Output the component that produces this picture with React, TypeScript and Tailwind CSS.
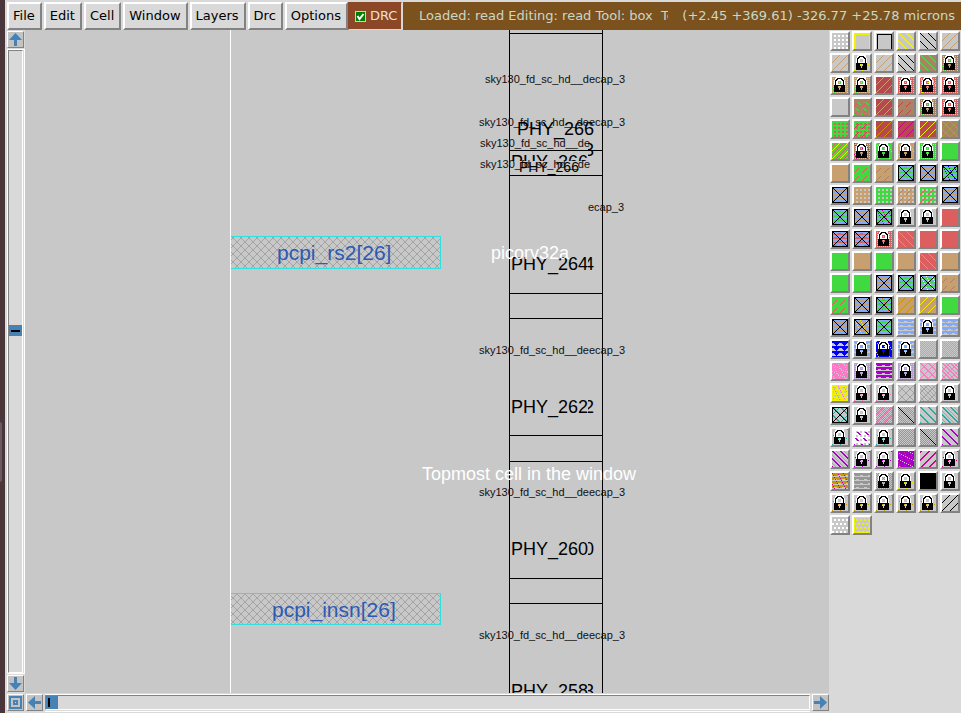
import React from "react";

type Mark = (x: number, y: number) => boolean;
type Layer = [Mark, string];
type Tile = { name: string; bg: string; layers: Layer[] };

const SIZE = 16;

const GRAY = "#c8c8c8";
const GREEN = "#40d940";
const RED = "#db5f5f";
const BRICK = "#b84750";
const TAN = "#c8a070";
const BROWN = "#ac8264";
const SKY = "#82a8f8";
const BLUE = "#0000ff";
const YELLOW = "#f0f000";
const GOLD = "#c89600";
const MAGENTA = "#c8008c";
const PURPLE = "#a800c8";
const LILAC = "#b8a0d0";
const PINK = "#ff78c8";
const TEAL = "#28a8a0";
const DIM = "#969696";
const WHITE = "#ffffff";
const BLACK = "#000000";

/* Stipple rules, evaluated once for each pixel of a layer swatch. */
const all: Mark = () => true;
const rise: Mark = (x, y) => (x + y) % 8 === 7;
const riseB: Mark = (x, y) => (x + y) % 8 === 3;
const fall: Mark = (x, y) => (x - y + 32) % 8 === 0;
const fallB: Mark = (x, y) => (x - y + 32) % 8 === 4;
const fallWide: Mark = (x, y) => (x - y + 32) % 8 < 2;
const riseWide: Mark = (x, y) => (x + y) % 8 < 2;
const riseDash: Mark = (x, y) => (x + y) % 8 === 7 && y % 8 > 2;
const fallDash: Mark = (x, y) => (x - y + 32) % 8 < 2 && y % 6 > 2;
const cross: Mark = (x, y) => fall(x, y) || rise(x, y);
const crossWide: Mark = (x, y) => fallWide(x, y) || rise(x, y);
const dots: Mark = (x, y) => x % 4 > 1 && y % 4 > 1;
const brickDots: Mark = (x, y) => y % 4 > 1 && (x + (y % 8 > 3 ? 2 : 0)) % 4 > 1;
const checker: Mark = (x, y) => (x + y) % 2 === 0;
const mesh: Mark = (x, y) => x % 2 === 0 || y % 2 === 0;
const specks: Mark = (x, y) => (x * 5 + y * 3) % 11 === 0;
const specksB: Mark = (x, y) => (x * 3 + y * 7) % 13 === 4;
const sparse: Mark = (x, y) => (x + y) % 8 === 7 && y % 3 === 0;
const waves: Mark = (x, y) => y % 4 === 3 || (y % 4 === 2 && (x + y) % 8 < 3);
const frame: Mark = (x, y) => x === 0 || x === 15 || y === 0 || y === 15;
const cap: Mark = (x, y) => y > 0 && (x === 1 || x === 15 || (y === 1 && x > 0));
const capWide: Mark = (x, y) => x < 2 || x > 14 || y < 2;
const contact: Mark = (x, y) => frame(x, y) || x === y || x + y === 15;
const slash: Mark = (x, y) => x === y;
const triangles: Mark = (x, y) => y % 5 === 1 || Math.abs((x % 8) - 4) < 5 - (y % 5);

const LOCK = [
  "....WWWWWWWW....",
  "...WWBBBBBWW....",
  "...WBBWWWBBW....",
  "..WBBWWWWWBBW...",
  "..WBWW...WWBW...",
  "..WBWW...WWBW...",
  "..WBWW...WWBW...",
  "..WBWWWWWWWBW...",
  "..BBBBBBBBBBB...",
  "..BBBB...BBBB...",
  "..BBBB...BBBB...",
  "..BBBBB.BBBBB...",
  "..BBBBB.BBBBB...",
  "..BBBBBBBBBBB...",
  "..BBBBBBBBBBB...",
  "................",
];
const lockWhite: Mark = (x, y) => LOCK[y][x] === "W";
const lockBlack: Mark = (x, y) => LOCK[y][x] === "B";

const t = (name: string, bg: string, ...layers: Layer[]): Tile => ({ name, bg, layers });
const lock = (name: string, ...layers: Layer[]): Tile =>
  t(name + " locked", GRAY, ...layers, [lockWhite, WHITE], [lockBlack, BLACK]);
const via = (name: string, tint: string, ...layers: Layer[]): Tile =>
  t(name, SKY, [waves, tint], ...layers, [contact, BLACK]);

const TILES: Tile[] = [
  t("grid", GRAY, [dots, WHITE]), t("edit box", GRAY, [capWide, YELLOW]), t("box", GRAY, [cap, BLACK]),
  t("highlight", GRAY, [fallWide, YELLOW]), t("cell", GRAY, [fall, BLACK]), t("nwell", GRAY, [rise, TAN]),

  t("pwell", GRAY, [rise, TAN]), lock("rpwell", [sparse, YELLOW]), t("isosub", GRAY, [rise, TAN]),
  t("obswell", GRAY, [fall, BLACK]), t("ndiff", BROWN, [fallWide, GREEN]), lock("pdiff", [mesh, BROWN], [specks, GREEN]),

  lock("nmos", [mesh, TAN], [specks, GREEN]), lock("pmos", [mesh, TAN], [specks, GREEN]), t("npoly", BRICK, [rise, TAN]),
  lock("ppoly", [mesh, RED]), lock("scpmos", [mesh, RED], [specks, YELLOW]), lock("scnmos", [mesh, RED]),

  t("blank", GRAY), t("varactor", BROWN, [riseDash, RED], [fallDash, GREEN]), t("poly", BRICK, [rise, TAN]),
  t("npres", BROWN, [riseDash, BRICK]), lock("mvnmos", [mesh, BROWN], [specks, GREEN]), lock("mvpmos", [mesh, RED]),

  t("ntap", GREEN, [dots, RED]), t("ptap", GREEN, [dots, RED], [riseDash, BRICK]), t("rpoly", BRICK, [rise, GOLD]),
  t("xpoly", BRICK, [rise, MAGENTA]), t("upoly", BRICK, [rise, YELLOW]), t("photo", BROWN, [fall, GREEN], [rise, "#98a040"]),

  t("nvaractor", GREEN, [rise, YELLOW], [riseB, RED]), lock("corenvar", [mesh, BROWN], [specks, MAGENTA]),
  lock("corepvar", [all, GREEN], [specks, GRAY]), lock("mvvar", [all, TAN], [specks, GRAY]), lock("pvar", [mesh, GREEN]), t("ndiffusion", GREEN),

  t("pdiffusion", TAN), t("nres", GREEN, [riseDash, RED]), t("pres", TAN, [riseDash, BROWN]),
  via("ndc", GREEN), via("pdc", TAN), via("nsc", GREEN, [specks, BLUE]),

  via("psc", TAN), t("psd", TAN, [dots, GRAY]), t("nsd", GREEN, [dots, GRAY]),
  t("mvpsd", TAN, [dots, GRAY], [riseDash, BROWN]), t("mvnsd", GREEN, [dots, GRAY], [riseDash, RED]), via("mvpsc", TAN),

  via("mvndc", GREEN), via("mvpdc", TAN), via("mvnsc", GREEN, [specks, MAGENTA]),
  lock("space"), lock("fill"), t("polysilicon", RED),

  via("pc", RED), via("xpc", RED), lock("polyfill", [mesh, RED]),
  t("polyres", RED, [fall, TAN]), t("mrp", RED), t("xhr", RED),

  t("nnd", GREEN), t("pnd", TAN), t("mvndiff", GREEN), t("mvpdiff", TAN), t("mvpoly", RED, [fall, TAN]), t("mvptap", TAN),

  t("mvntap", GREEN), t("nfd", GREEN), via("pfc", TAN), via("nfc", GREEN), via("nfs", GREEN, [specks, WHITE]), t("pfr", TAN, [riseDash, BROWN]),

  t("diode", GREEN, [riseDash, RED]), via("dc", TAN), via("dcn", GREEN, [specks, RED]),
  t("pdiode", TAN, [rise, GOLD]), t("hvdiode", TAN, [rise, YELLOW]), t("lvdiode", GREEN),

  via("pdic", TAN), via("mvpdic", TAN, [specks, YELLOW]), via("ndic", GREEN),
  t("locali", SKY, [waves, GRAY]), lock("obsli", [all, SKY], [waves, GRAY]), t("rli", SKY, [waves, GRAY], [fall, TAN]),

  t("coreli", GRAY, [triangles, BLUE]), lock("lifill", [all, SKY], [waves, GRAY]), lock("corelifill", [all, BLUE], [specks, GRAY]),
  lock("lires", [all, SKY], [waves, GRAY]), t("metal1", GRAY, [checker, LILAC]), t("rm1", GRAY, [checker, LILAC], [fall, TAN]),

  t("via1", PINK, [specks, GRAY], [specksB, GRAY]), lock("obsm1", [mesh, LILAC]), t("m1fill", PURPLE, [waves, GRAY]),
  lock("m1block", [mesh, LILAC]), t("metal2", GRAY, [crossWide, PINK]), t("rm2", GRAY, [crossWide, PINK], [fallB, TAN]),

  t("via2", YELLOW, [brickDots, GRAY], [specks, PINK], [frame, YELLOW]), lock("obsm2", [sparse, PINK]), lock("m2fill", [sparse, PINK]),
  t("metal3", GRAY, [cross, "#a0a0a0"]), t("rm3", GRAY, [cross, "#a0a0a0"], [fallB, TAN]), lock("obsm3"),

  t("via3", GRAY, [crossWide, TEAL], [contact, BLACK]), lock("m3fill"), t("mimcap", GRAY, [checker, DIM], [cross, PINK]),
  t("mimcc", GRAY, [checker, DIM], [fallB, PINK], [slash, BLACK]), t("metal4", GRAY, [fallWide, TEAL]), t("rm4", GRAY, [fallWide, TEAL], [fallB, TAN]),

  lock("obsm4", [sparse, TEAL]), t("via4", WHITE, [dots, GRAY], [fallDash, PURPLE]), lock("m4fill", [sparse, TEAL]),
  t("mimcap2", GRAY, [checker, DIM]), t("mim2cc", GRAY, [checker, DIM], [slash, BLACK]), t("metal5", GRAY, [fallWide, PURPLE]),

  t("rm5", GRAY, [fallWide, PURPLE], [fallB, TAN]), lock("obsm5", [sparse, PURPLE]), lock("m5fill", [sparse, PURPLE]),
  t("glass", PURPLE, [specks, "#c828a0"], [specksB, GRAY]), t("rdl", GRAY, [riseWide, MAGENTA]), lock("obsrdl", [sparse, MAGENTA]),

  t("rdlc", GOLD, [waves, GRAY], [specks, MAGENTA]), t("comment", DIM, [waves, GRAY]), lock("bb", [checker, DIM]),
  lock("boundary", [sparse, YELLOW]), t("error", BLACK), lock("res"),

  lock("pad", [sparse, GOLD]), lock("padl", [sparse, GOLD]), lock("res0p35", [sparse, GOLD]), lock("res0p69", [sparse, GOLD]),
  lock("res1p41", [sparse, GOLD]), t("magnet", GRAY, [rise, BLACK]),

  t("fence", GRAY, [brickDots, WHITE]), t("rotate", GRAY, [brickDots, YELLOW], [frame, YELLOW]),
];

/* Turns a stipple rule into one path made of horizontal runs. */
function runs(mark: Mark): string {
  let d = "";
  for (let y = 0; y < SIZE; y++) {
    let start = -1;
    for (let x = 0; x <= SIZE; x++) {
      const on = x < SIZE && mark(x, y);
      if (on && start < 0) start = x;
      if (!on && start >= 0) {
        d += `M${start} ${y}h${x - start}v1h${start - x}z`;
        start = -1;
      }
    }
  }
  return d;
}

function Swatch({ tile }: { tile: Tile }) {
  return (
    <button
      type="button"
      aria-label={tile.name}
      className="size-5 border-2 border-t-white border-l-white border-r-[#828282] border-b-[#828282]"
    >
      <svg viewBox="0 0 16 16" className="block size-4" shapeRendering="crispEdges" aria-hidden="true">
        <rect width="16" height="16" fill={tile.bg} />
        {tile.layers.map(([mark, color], i) => (
          <path key={i} d={runs(mark)} fill={color} />
        ))}
      </svg>
    </button>
  );
}

function ArrowButton({ label, turn }: { label: string; turn: string }) {
  return (
    <button
      type="button"
      aria-label={label}
      className="size-[17px] shrink-0 border border-t-white border-l-white border-r-[#828282] border-b-[#828282] bg-[#c3c3c3]"
    >
      <svg viewBox="0 0 15 15" className={"block size-[15px] " + turn} aria-hidden="true">
        <path d="M7.5 1L14 8H9v6H6V8H1z" fill="#4682b4" />
      </svg>
    </button>
  );
}

const MENUS = ["File", "Edit", "Cell", "Window", "Layers", "Drc", "Options"];

function MenuBar() {
  return (
    <header className="flex h-[30px] shrink-0 items-stretch bg-[#d9d9d9] pt-0.5 pl-0.5">
      <nav className="flex gap-0.5">
        {MENUS.map((m) => (
          <button
            key={m}
            type="button"
            className="border-2 border-t-white border-l-white border-r-[#828282] border-b-[#828282] bg-[#d9d9d9] pr-[5px] pl-1 text-black"
          >
            {m}
          </button>
        ))}
      </nav>
      <label className="mr-px flex w-[54px] items-center gap-1 border border-[#e8d0c8] border-t-[#8b4726] border-l-[#8b4726] bg-[#8b4726] pl-1.5 text-[#f0e0d8]">
        <span className="relative flex">
          <input type="checkbox" defaultChecked className="size-[11px] appearance-none border border-[#d0d0c0] bg-[#008000]" />
          <svg viewBox="0 0 11 11" className="pointer-events-none absolute inset-0 size-[11px]" aria-hidden="true">
            <path d="M2.5 5l2 3 4-5" fill="none" stroke="white" strokeWidth="2" />
          </svg>
        </span>
        DRC
      </label>
      <div className="flex min-w-0 flex-1 items-center justify-between bg-[#7b511e] pr-1.5 pl-4 whitespace-pre text-[#c8d8c8]">
        <span className="w-[249px] overflow-hidden">Loaded: read Editing: read Tool: box  Technology</span>
        <span>(+2.45 +369.61) -326.77 +25.78 microns</span>
      </div>
    </header>
  );
}

const H_LINES = [3, 120, 145, 263, 288, 405, 431, 548, 573];
const ROWS = [
  { cell: 324, base: 383, name: "PHY_262", tail: "2" },
  { cell: 466, base: 525, name: "PHY_260", tail: "0" },
  { cell: 609, base: 667, name: "PHY_258", tail: "3" },
];

function LayoutView() {
  return (
    <svg
      className="min-h-0 w-full flex-1 bg-[#c8c8c8] font-['Liberation_Sans',Arial,sans-serif]"
      role="img"
      aria-label="Layout of picorv32a"
    >
      <defs>
        <pattern id="hatch" width="8" height="8" patternUnits="userSpaceOnUse">
          <path d="M0 0L8 8M8 0L0 8" stroke="#a4a4a4" strokeWidth="1" />
        </pattern>
        <clipPath id="upper"><rect x="480" y="122" width="100" height="9" /></clipPath>
        <clipPath id="edge"><rect x="563" y="100" width="12" height="600" /></clipPath>
      </defs>

      <g shapeRendering="crispEdges">
        <path d="M205.5 0V2000" stroke="white" />
        <rect x="206" y="206" width="210" height="33" fill="url(#hatch)" />
        <path d="M206 206.5H415.5V238.5H206" fill="none" stroke="#30e0e0" />
        <rect x="206" y="563" width="210" height="32" fill="url(#hatch)" />
        <path d="M206 563.5H415.5V594.5H206" fill="none" stroke="#30e0e0" />
        <path d="M484.5 0V2000M577.5 0V2000" stroke="black" />
        {H_LINES.map((y) => (
          <path key={y} d={`M484 ${y}.5H578`} stroke="black" />
        ))}
      </g>

      <g fill="#2c5ab4" fontSize="21">
        <text x="252" y="230">pcpi_rs2[26]</text>
        <text x="247" y="587">pcpi_insn[26]</text>
      </g>

      <g fill="#101010" fontSize="11">
        <text x="530" y="53" textAnchor="middle">sky130_fd_sc_hd__decap_3</text>
        <text x="527" y="96" textAnchor="middle">sky130_fd_sc_hd__deecap_3</text>
        <text x="455" y="117">sky130_fd_sc_hd__de</text>
        <text x="455" y="138">sky130_fd_sc_hd__de</text>
        <text x="599" y="181" textAnchor="end">ecap_3</text>
        {ROWS.map((r) => (
          <text key={r.name} x="527" y={r.cell} textAnchor="middle">sky130_fd_sc_hd__deecap_3</text>
        ))}
      </g>

      <g fill="black" fontSize="18">
        <text x="492" y="105">PHY_266</text>
        <text x="559" y="126" clipPath="url(#edge)">3</text>
        <text x="486" y="138" clipPath="url(#upper)">PHY_266</text>
        <text x="494" y="142" fontSize="14">PHY_266</text>
        <text x="486" y="240">PHY_264</text>
        <text x="559" y="240" clipPath="url(#edge)">4</text>
        {ROWS.map((r) => (
          <React.Fragment key={r.name}>
            <text x="486" y={r.base}>{r.name}</text>
            <text x="559" y={r.base} clipPath="url(#edge)">{r.tail}</text>
          </React.Fragment>
        ))}
      </g>

      <g fill="white" fontSize="18">
        <text x="466" y="229">picorv32a</text>
        <text x="397" y="450">Topmost cell in the window</text>
      </g>
    </svg>
  );
}

function VerticalScroll() {
  return (
    <div className="flex w-5 shrink-0 flex-col bg-[#d9d9d9] pt-px pb-px pl-0.5">
      <ArrowButton label="Scroll up" turn="" />
      <div className="my-px flex w-[18px] flex-1 flex-col border border-white pr-px">
        <div className="flex flex-1 flex-col border border-t-[#828282] border-r-white border-b-white border-l-[#828282]">
          <div className="grow-[275]" />
          <div className="flex h-[11px] items-center justify-center bg-[#4682b4]">
            <div className="h-0.5 w-[9px] bg-black" />
          </div>
          <div className="grow-[337]" />
        </div>
      </div>
      <ArrowButton label="Scroll down" turn="rotate-180" />
    </div>
  );
}

function HorizontalScroll() {
  return (
    <div className="flex h-5 shrink-0 items-start gap-0.5 bg-[#d9d9d9] pt-px pl-0.5">
      <button
        type="button"
        aria-label="Zoom to full view"
        className="size-[17px] shrink-0 border border-t-white border-l-white border-r-[#828282] border-b-[#828282] bg-[#c3c3c3]"
      >
        <svg viewBox="0 0 15 15" className="block size-[15px]" shapeRendering="crispEdges" aria-hidden="true">
          <path d="M2 2h11v11H2z" fill="none" stroke="#4682b4" strokeWidth="2" />
          <path d="M5 5h5v5H5z" fill="#4682b4" />
          <path d="M7 7h1v1H7z" fill="#d9d9d9" />
        </svg>
      </button>
      <ArrowButton label="Scroll left" turn="-rotate-90" />
      <div className="flex h-[18px] flex-1 border-y border-white pb-px">
        <div className="flex flex-1 items-stretch border border-t-[#828282] border-r-white border-b-white border-l-[#828282]">
          <div className="flex w-3 items-center bg-[#4682b4] pl-0.5">
            <div className="h-[9px] w-0.5 bg-black" />
          </div>
        </div>
      </div>
      <ArrowButton label="Scroll right" turn="rotate-90" />
    </div>
  );
}

export default function App() {
  return (
    <div className="flex h-screen overflow-hidden bg-[#d9d9d9] font-['DejaVu_Sans',sans-serif] text-[13px] leading-4">
      <aside className="flex w-[5px] shrink-0 flex-col bg-[#49353a]">
        <div className="grow-[422]" />
        <div className="h-[60px] w-0.5 rounded-r-sm bg-[#6a5a60]" />
        <div className="grow-[231]" />
      </aside>
      <div className="flex min-w-0 flex-1 flex-col">
        <MenuBar />
        <div className="flex min-h-0 flex-1">
          <main className="flex min-w-0 flex-1 flex-col">
            <div className="flex min-h-0 flex-1">
              <VerticalScroll />
              <LayoutView />
            </div>
            <HorizontalScroll />
          </main>
          <aside className="grid shrink-0 grid-cols-6 content-start gap-0.5 pt-px pr-px pl-px" aria-label="Layers">
            {TILES.map((tile) => (
              <Swatch key={tile.name} tile={tile} />
            ))}
          </aside>
        </div>
      </div>
    </div>
  );
}
